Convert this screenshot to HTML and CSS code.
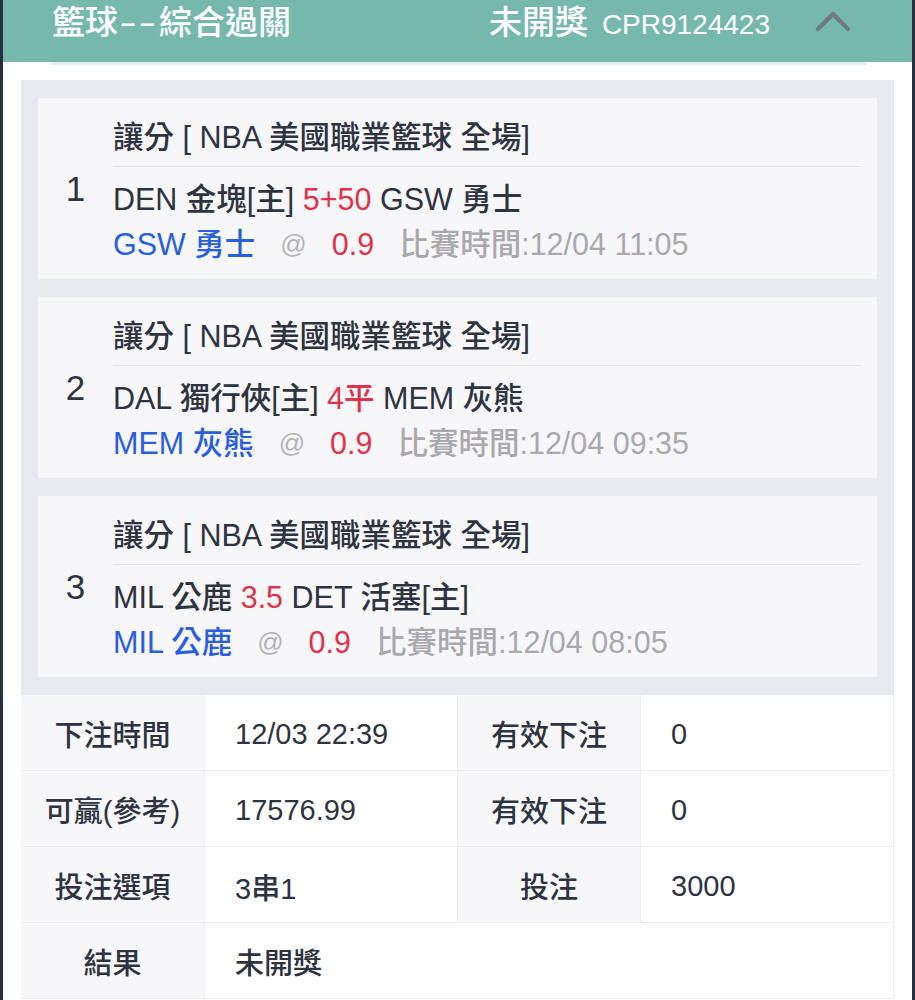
FILE: index.html
```html
<!DOCTYPE html>
<html lang="zh-Hant">
<head>
<meta charset="utf-8">
<title>籃球--綜合過關</title>
<link rel="stylesheet" href="styles.css">
</head>
<body>
<div class="page">
  <header class="hd">
    <div class="hd-title">籃球<span class="dash">--</span>綜合過關</div>
    <div class="hd-right">
      <span class="hd-status">未開獎</span>
      <span class="hd-code">CPR9124423</span>
      <svg class="hd-chevron" width="36" height="22" viewBox="0 0 36 22"><polyline points="3,19 18,4 33,19" fill="none" stroke="#6f7d81" stroke-width="4.5" stroke-linecap="round" stroke-linejoin="round"/></svg>
    </div>
  </header>
  <div class="hd-rule"></div>
  <main class="content">
    <section class="legs">
      <div class="leg">
        <div class="leg-no">1</div>
        <div class="leg-body">
          <div class="leg-title">讓分 [ NBA 美國職業籃球 全場]</div>
          <div class="leg-match">DEN 金塊[主] <span class="red">5+50</span> GSW 勇士</div>
          <div class="leg-pick"><span class="blue">GSW 勇士</span><span class="at">@</span><span class="red">0.9</span><span class="time">比賽時間:12/04 11:05</span></div>
        </div>
      </div>
      <div class="leg">
        <div class="leg-no">2</div>
        <div class="leg-body">
          <div class="leg-title">讓分 [ NBA 美國職業籃球 全場]</div>
          <div class="leg-match">DAL 獨行俠[主] <span class="red">4平</span> MEM 灰熊</div>
          <div class="leg-pick"><span class="blue">MEM 灰熊</span><span class="at">@</span><span class="red">0.9</span><span class="time">比賽時間:12/04 09:35</span></div>
        </div>
      </div>
      <div class="leg">
        <div class="leg-no">3</div>
        <div class="leg-body">
          <div class="leg-title">讓分 [ NBA 美國職業籃球 全場]</div>
          <div class="leg-match">MIL 公鹿 <span class="red">3.5</span> DET 活塞[主]</div>
          <div class="leg-pick"><span class="blue">MIL 公鹿</span><span class="at">@</span><span class="red">0.9</span><span class="time">比賽時間:12/04 08:05</span></div>
        </div>
      </div>
    </section>
    <section class="summary">
      <div class="lbl">下注時間</div><div class="val">12/03 22:39</div>
      <div class="lbl">有效下注</div><div class="val">0</div>
      <div class="lbl">可贏(參考)</div><div class="val">17576.99</div>
      <div class="lbl">有效下注</div><div class="val">0</div>
      <div class="lbl">投注選項</div><div class="val">3串1</div>
      <div class="lbl">投注</div><div class="val">3000</div>
      <div class="lbl">結果</div><div class="val wide">未開獎</div>
    </section>
  </main>
</div>
</body>
</html>
```
FILE: styles.css
```css
* { box-sizing: border-box; }
html, body { margin: 0; padding: 0; background: #ffffff; }
body {
  font-family: "Liberation Sans", "Noto Sans CJK TC", sans-serif;
  font-weight: 500;
  color: #2e3340;
}
.page {
  width: 915px;
  height: 1000px;
  overflow: hidden;
  border-left: 3px solid #28303e;
  border-right: 3px solid #28303e;
  background: #ffffff;
}
.hd {
  height: 62px;
  background: #77b8ad;
  color: #ffffff;
  display: flex;
  align-items: flex-start;
  padding: 0 61px 0 49px;
}
.hd-title {
  font-size: 33px;
  line-height: 46px;
}
.dash {
  display: inline-block;
  width: 41px;
  text-align: center;
  letter-spacing: 1px;
  transform: scaleX(1.6);
}
.hd-right {
  margin-left: auto;
  display: flex;
  align-items: baseline;
  line-height: 46px;
}
.hd-status { font-size: 33px; }
.hd-code { font-size: 28px; margin-left: 14px; }
.hd-chevron { margin-left: 45px; align-self: flex-start; margin-top: 10px; }
.hd-rule {
  height: 3px;
  margin: 0 46px 0 48px;
  background: #e2f0ee;
}
.content { padding: 15px 18px 0 18px; }
.legs {
  background: #e9eaef;
  padding: 18px 17px;
  display: flex;
  flex-direction: column;
  gap: 18px;
}
.leg {
  background: #f7f7f9;
  height: 181px;
  display: flex;
  align-items: center;
}
.leg-no {
  width: 75px;
  text-align: center;
  font-size: 35px;
  color: #2e3340;
}
.leg-body {
  flex: 1;
  align-self: stretch;
  padding: 19px 16px 0 0;
  font-size: 30.5px;
  line-height: 40px;
}
.leg-title {
  padding-bottom: 9px;
  border-bottom: 1px solid #e4e5ea;
}
.leg-match { margin-top: 12px; }
.leg-pick {
  margin-top: 5px;
  display: flex;
  gap: 25px;
}
.red { color: #df3349; }
.blue { color: #2a5ee0; }
.at { color: #b3b3b6; font-size: 26px; }
.time { color: #a9a9ad; }
.summary {
  display: grid;
  grid-template-columns: 184px 253px 183px 1fr;
  grid-auto-rows: 76px;
  font-size: 29px;
}
.lbl, .val {
  display: flex;
  align-items: center;
  border-bottom: 1px solid #ececf0;
}
.lbl {
  justify-content: center;
  background: #f7f7f9;
  border-right: 1px solid #efeff2;
}
.val {
  background: #ffffff;
  padding: 3px 0 0 30px;
  border-right: 1px solid #efeff2;
}
.val.wide { grid-column: span 3; padding-top: 0; }
```
